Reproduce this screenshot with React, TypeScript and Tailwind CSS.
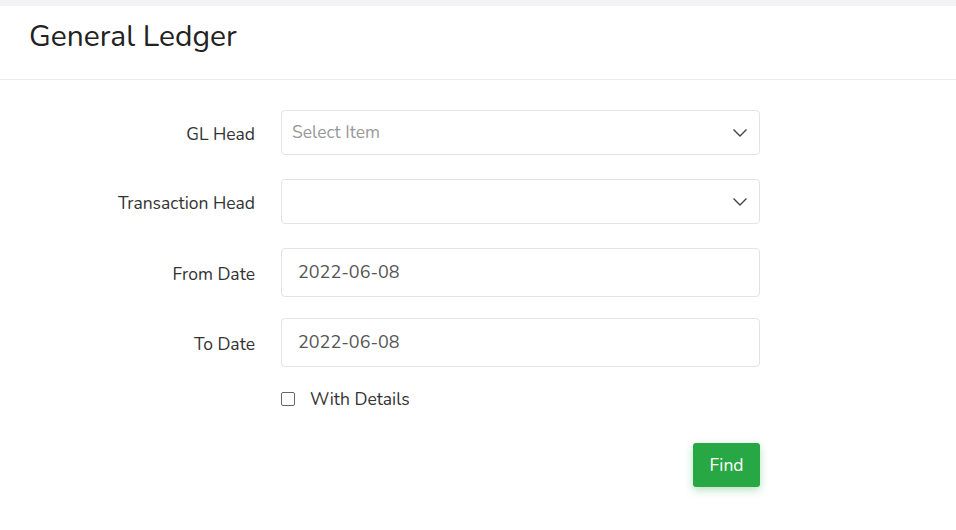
import { JSX } from "react";

const Chevron = (): JSX.Element => (
  <svg width="16" height="10" viewBox="0 0 16 10" fill="none" className="shrink-0">
    <path d="M1.5 1.5 L8 8 L14.5 1.5" stroke="#444" strokeWidth="1.4" />
  </svg>
);

const Label = ({ text }: { text: string }): JSX.Element => (
  <div className="w-[256px] pr-[1px] pt-[4px] text-right text-[17.5px] text-[#333]">{text}</div>
);

const App = (): JSX.Element => {
  return (
    <div className="min-h-[530px] bg-white font-['Nunito','Lato',sans-serif]">
      <div className="h-[6px] bg-[#f3f3f5]" />
      <div className="h-[74px] border-b border-[#ececec] pl-[29px] pt-[13px]">
        <h1 className="text-[30px] leading-[36px] text-[#222]">General Ledger</h1>
      </div>

      <div className="flex flex-col pt-[30px]">
        <div className="flex items-center gap-[25px]">
          <Label text="GL Head" />
          <div className="flex h-[45px] w-[479px] items-center justify-between rounded-[4px] border border-[#e3e3e3] pl-[10px] pr-[11px]">
            <span className="text-[17.5px] text-[#999]">Select Item</span>
            <Chevron />
          </div>
        </div>

        <div className="mt-[24px] flex items-center gap-[25px]">
          <Label text="Transaction Head" />
          <div className="flex h-[45px] w-[479px] items-center justify-end rounded-[4px] border border-[#e3e3e3] pr-[11px]">
            <Chevron />
          </div>
        </div>

        <div className="mt-[24px] flex items-center gap-[25px]">
          <Label text="From Date" />
          <div className="flex h-[49px] w-[479px] items-center rounded-[4px] border border-[#e3e3e3] pl-[16px] text-[18px] text-[#555]">
            2022-06-08
          </div>
        </div>

        <div className="mt-[21px] flex items-center gap-[25px]">
          <Label text="To Date" />
          <div className="flex h-[49px] w-[479px] items-center rounded-[4px] border border-[#e3e3e3] pl-[16px] text-[18px] text-[#555]">
            2022-06-08
          </div>
        </div>

        <div className="mt-[19px] flex items-center pl-[281px]">
          <div className="h-[14px] w-[14px] rounded-[2px] border border-[#666]" />
          <span className="ml-[15px] text-[17.5px] text-[#333]">With Details</span>
        </div>

        <div className="mt-[31px] flex w-[760px] justify-end">
          <button className="h-[44px] w-[67px] rounded-[3px] bg-[#28a745] text-[17.5px] text-white shadow-[0_3px_8px_rgba(40,167,69,0.35)]">
            Find
          </button>
        </div>
      </div>
    </div>
  );
};

export default App;
